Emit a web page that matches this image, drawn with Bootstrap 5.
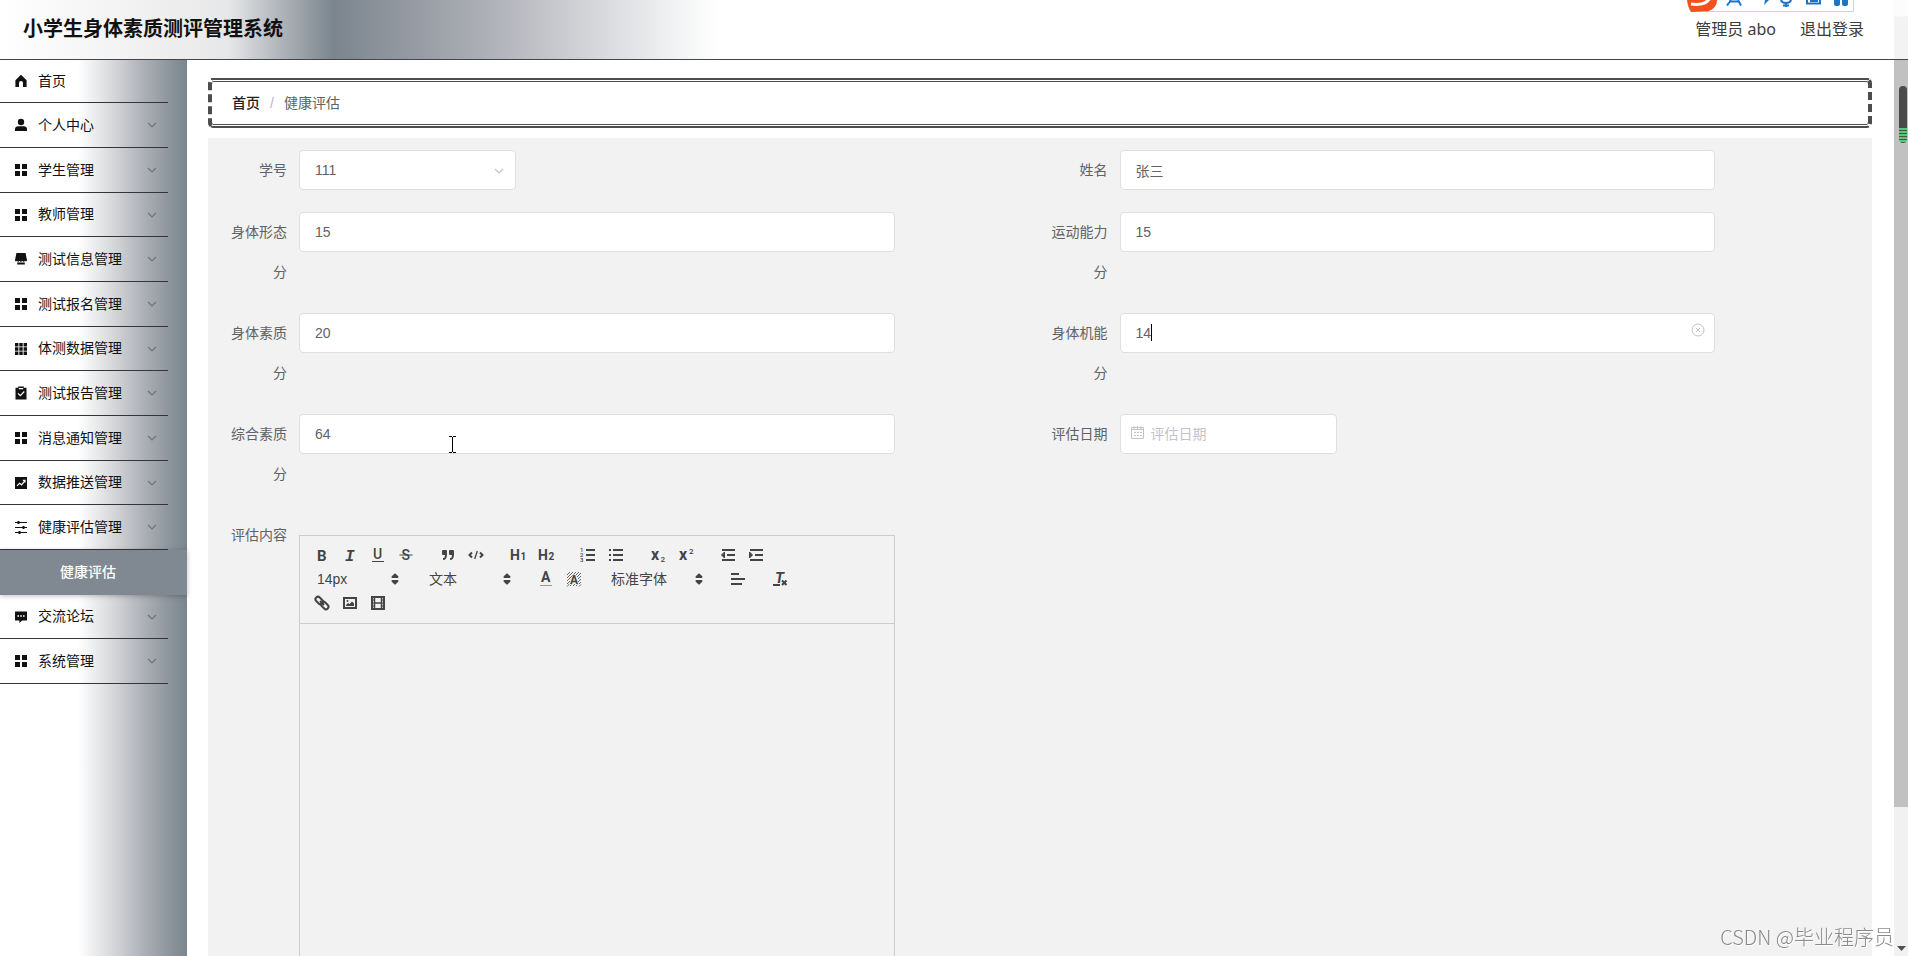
<!DOCTYPE html>
<html lang="zh-CN">
<head>
<meta charset="utf-8">
<meta name="viewport" content="width=device-width, initial-scale=1">
<title>小学生身体素质测评管理系统</title>
<link href="https://cdn.jsdelivr.net/npm/bootstrap@5.3.0/dist/css/bootstrap.min.css" rel="stylesheet">
<style>
  body { font-family: "Liberation Sans", "Noto Sans CJK SC", sans-serif; font-size: 14px; color: #606266; background: #fff; }
  svg { display: block; }
  .topbar { height: 60px; border-bottom: 1px solid #45464b; padding: 0 30px 1px 23px;
    background: linear-gradient(90deg, #fff 0, #ececec 190px, #e6e7e8 228px, #b0b5ba 280px, #7b858d 334px, #9298a0 402px, #adafb6 485px, #d0d2d6 582px, #f3f4f5 680px, #fff 720px); }
  .brand { font-size: 20px; font-weight: 700; color: #111; margin: 0; }
  .toplinks { gap: 24px; font-family: "Noto Sans", "Noto Sans CJK SC", sans-serif; font-size: 16px; }
  .toplinks a, .toplinks span { color: #3c3c3c; text-decoration: none; }
  .ime { right: 39px; top: 0; width: 169px; height: 12px; overflow: hidden; }

  .sidebar { width: 187px; background: linear-gradient(90deg, #fff 0, #fff 78px, #e9eaeb 97px, #cfd1d4 118px, #b4b7bc 138px, #8e969e 168px, #7a858c 187px); }
  .menu li { height: 45px; }
  .menu li:nth-child(3n+1) { height: 44px; }
  .menu li:first-child { height: 43px; }
  .menu a { height: 100%; margin-right: 19px; padding: 0 11px 0 14px; border-bottom: 1px solid #33353a; color: #111; text-decoration: none; gap: 10px; }
  .menu svg.mi { width: 14px; height: 14px; }
  .menu svg.chev { width: 10px; height: 10px; color: #6d737a; }
  .menu li.sub a { margin: 0; padding: 0 0 0 60px; background: #808891; color: #fff; border: 0; font-weight: 500; box-shadow: 0 1px 5px rgba(0,0,0,.25); position: relative; }

  .page-main { padding: 18px 22px 0 21px; }
  .crumbs { height: 50px; border: solid #4d4d4f; border-width: 2px 4px; border-style: solid dashed; border-radius: 5px; padding: 0 20px; margin-bottom: 10px;
    box-shadow: inset 0 1px #fff, inset 0 -1px #fff, inset 0 2px #4d4d4f, inset 0 -2px #4d4d4f; }
  .crumbs .breadcrumb-item + .breadcrumb-item { padding-left: 10px; }
  .crumbs .breadcrumb-item + .breadcrumb-item::before { padding-right: 10px; color: #b5b9c2; }
  .crumbs a { color: #222; text-decoration: none; font-weight: 500; }
  .crumbs .active { color: #606266; }
  .panel { background: #f2f2f2; padding: 12px 12px 0 11px; }

  .field { display: flex; align-items: flex-start; padding-right: 145px; margin-bottom: 21px; }
  .field.first { margin-bottom: 22px; }
  .field > label { width: 80px; flex: none; text-align: right; padding-right: 12px; line-height: 40px; }
  .field .ctl { position: relative; flex: 1; min-width: 0; }
  .field .ctl.short { flex: none; width: 217px; }
  .field .form-control, .field .form-select { height: 40px; font-size: 14px; color: #606266; border: 1px solid #dddfe2; border-radius: 4px; padding: 0 15px; background: #fff; }
  .form-control::placeholder { color: #c0c4cc; }
  .field .form-control.with-icon { padding-left: 30px; }
  .ov { position: absolute; color: #c0c4cc; pointer-events: none; }
  .ov.chev { right: 12px; top: 16px; }
  .ov.cal { left: 11px; top: 12px; }
  .ov.clear { right: 10px; top: 10px; border: 0; padding: 0; background: none; }
  .ov.caret { left: 31px; top: 11px; width: 1px; height: 17px; background: #000; }
  .ov.ibeam { left: 149px; top: 22px; color: #000; }

  .editor { flex: 1; margin-top: 20px; min-width: 0; color: #444; border: 1px solid #ccc; }
  .toolbar { padding: 7px 8px 8px; border-bottom: 1px solid #ccc; }
  .toolbar .line { display: flex; gap: 14px; height: 24px; }
  .toolbar .set { display: flex; }
  .toolbar button { width: 28px; height: 24px; border: 0; background: none; padding: 3px 5px; color: #444; }
  .toolbar button svg { width: 18px; height: 18px; }
  .toolbar svg text { fill: currentColor; font-family: Roboto, "Liberation Sans", sans-serif; font-weight: 500; }
  .pick { position: relative; width: 98px; }
  .pick.wide { width: 108px; }
  .pick select { appearance: none; border: 0; background: none; width: 100%; height: 24px; padding: 0 9px; color: #444; font-size: 14px; line-height: 24px; }
  .pick svg { position: absolute; right: 2px; top: 3px; pointer-events: none; }
  .editor textarea { display: block; width: 100%; height: 400px; border: 0; background: none; resize: none; padding: 12px 15px; outline: 0; }

  .scrollcol { width: 14px; background: #f1f1f1; }
  .scrollcol .cap { height: 60px; border-bottom: 1px solid #45464b; background: linear-gradient(#fcfcfc 16px, #f3f3f3 17px); }
  .scrollcol .thumb { flex: 0 0 83%; max-height: 747px; background: #c1c1c1; padding: 26px 1px 0 5px; }
  .pill { height: 57px; border-radius: 4px; background: linear-gradient(#4a4a4a, #4a4a4a) 0 0 / 100% 42px no-repeat, repeating-linear-gradient(#59c87c 0 2px, #3b5a45 2px 3px); }
  .watermark { position: fixed; right: 14px; bottom: 5px; font-family: "Noto Sans CJK SC", sans-serif; font-weight: 300; font-size: 20px; line-height: 28px; color: #8a8a8a; text-shadow: 1px 1px 0 #fff; }
</style>
</head>
<body class="d-flex vh-100 overflow-hidden">
<svg width="0" height="0" class="position-absolute" aria-hidden="true">
  <symbol id="home" viewBox="0 0 14 14"><path d="M7 .8 12.6 6.200V13H9V9a2 2 0 0 0-4 0v4H1.400V6.200z" fill="currentColor"/></symbol>
  <symbol id="user" viewBox="0 0 14 14"><circle cx="7" cy="4" r="3.200" fill="currentColor"/><path d="M1 13v-2c0-1.800 1.500-2.800 3-2.800h6c1.500 0 3 1 3 2.800v2z" fill="currentColor"/></symbol>
  <symbol id="four" viewBox="0 0 14 14"><path d="M1 1h5v5H1zM8 1h5v5H8zM1 8h5v5H1zM8 8h5v5H8z" fill="currentColor"/></symbol>
  <symbol id="nine" viewBox="0 0 14 14"><path d="M1 1h3.400v3.400H1zM5.300 1h3.400v3.400H5.300zM9.600 1H13v3.400H9.600zM1 5.300h3.400v3.400H1zM5.300 5.300h3.400v3.400H5.300zM9.600 5.300H13v3.400H9.600zM1 9.600h3.400V13H1zM5.300 9.600h3.400V13H5.300zM9.600 9.600H13V13H9.600z" fill="currentColor"/></symbol>
  <symbol id="shop" viewBox="0 0 14 14"><path d="M2.400 1h9.200L13 8.200c0 1-1.200 1.600-2 .6-.9 1.200-2.200 1.200-2.700 0-.8 1.200-2.200 1.200-2.800 0C4.900 10 3.700 10 3 8.800c-.8 1-2 .4-2-.6zM3.200 10.600h7.600V12.600H3.200z" fill="currentColor"/></symbol>
  <symbol id="clip" viewBox="0 0 14 14"><path d="M1.500 1.800h2.700V.600h5.600v1.200h2.700V13.400h-11z" fill="currentColor"/><path d="M4 7.400l2.300 2.300 4-4.200M4.800 2.600h4.400" fill="none" stroke="#fff" stroke-width="1.200"/></symbol>
  <symbol id="chart" viewBox="0 0 14 14"><path d="M1 1h12v12H1z" fill="currentColor"/><path d="M3 9.800l2.600-2.600 2 1.600L11 4.600M8.800 4.400H11v2" fill="none" stroke="#fff" stroke-width="1.200"/></symbol>
  <symbol id="sliders" viewBox="0 0 14 14"><path d="M1 2.500h12M1 7.500h12M1 12.500h12" stroke="currentColor"/><path d="M4.500 1v3M9.500 6v3M5.500 11v3" stroke="currentColor" stroke-width="2"/></symbol>
  <symbol id="chat" viewBox="0 0 14 14"><path d="M1 1.400h12v9H8.200L5.400 13v-2.600H1z" fill="currentColor"/><path d="M3.400 5.200h1.600v1.600H3.400zM6.200 5.200h1.600v1.600H6.200zM9 5.200h1.600v1.600H9z" fill="#fff"/></symbol>
  <symbol id="down" viewBox="0 0 10 10"><path d="M1 3l4 4 4-4" fill="none" stroke="currentColor" stroke-width="1.200"/></symbol>
  <symbol id="updown" viewBox="0 0 18 18"><path d="M6.500 7 9 4.500l2.500 2.500zM6.500 11 9 13.500l2.500-2.500z" fill="currentColor" stroke="currentColor" stroke-width="2" stroke-linejoin="round"/></symbol>
</svg>

<div class="d-flex flex-column flex-grow-1" style="min-width:0">
  <header class="topbar d-flex align-items-center justify-content-between position-relative flex-shrink-0">
    <h1 class="brand">小学生身体素质测评管理系统</h1>
    <div class="toplinks d-flex"><span>管理员 abo</span><a href="#">退出登录</a></div>
    <svg class="ime position-absolute" viewBox="0 0 169 12" aria-hidden="true">
      <path d="M20 11.500H167.500V0" fill="none" stroke="#bcd9e6"/>
      <path d="M1 0h30c0 5-3 10-10 11.500L5 12C3 9 1.500 5 1 0z" fill="#f4501e"/>
      <path d="M5 4c7 1 15 1 19-6" fill="none" stroke="#fff" stroke-width="3"/>
      <g fill="none" stroke="#1b74cc" stroke-width="2"><path d="M41 5.500l4-5.500M52 0l3 5.500M43 1.500h10M95 0c1 4 9 4 10 0M100 3v4M97 5.500h6M121 0v3.500h13V0M124 1h8"/></g>
      <path d="M79 0h4l-5 5z" fill="#1b74cc"/>
      <path d="M148 0h6v4a2 2 0 0 1-2 2h-2a2 2 0 0 1-2-2zM156 0h6v4a2 2 0 0 1-2 2h-2a2 2 0 0 1-2-2z" fill="#1b74cc"/>
    </svg>
  </header>

  <div class="d-flex flex-grow-1" style="min-height:0">
    <nav class="sidebar flex-shrink-0" aria-label="主菜单">
      <ul class="menu list-unstyled m-0">
        <li><a href="#" class="d-flex align-items-center"><svg class="mi"><use href="#home"/></svg>首页</a></li>
        <li><a href="#" class="d-flex align-items-center"><svg class="mi"><use href="#user"/></svg>个人中心<svg class="chev ms-auto"><use href="#down"/></svg></a></li>
        <li><a href="#" class="d-flex align-items-center"><svg class="mi"><use href="#four"/></svg>学生管理<svg class="chev ms-auto"><use href="#down"/></svg></a></li>
        <li><a href="#" class="d-flex align-items-center"><svg class="mi"><use href="#four"/></svg>教师管理<svg class="chev ms-auto"><use href="#down"/></svg></a></li>
        <li><a href="#" class="d-flex align-items-center"><svg class="mi"><use href="#shop"/></svg>测试信息管理<svg class="chev ms-auto"><use href="#down"/></svg></a></li>
        <li><a href="#" class="d-flex align-items-center"><svg class="mi"><use href="#four"/></svg>测试报名管理<svg class="chev ms-auto"><use href="#down"/></svg></a></li>
        <li><a href="#" class="d-flex align-items-center"><svg class="mi"><use href="#nine"/></svg>体测数据管理<svg class="chev ms-auto"><use href="#down"/></svg></a></li>
        <li><a href="#" class="d-flex align-items-center"><svg class="mi"><use href="#clip"/></svg>测试报告管理<svg class="chev ms-auto"><use href="#down"/></svg></a></li>
        <li><a href="#" class="d-flex align-items-center"><svg class="mi"><use href="#four"/></svg>消息通知管理<svg class="chev ms-auto"><use href="#down"/></svg></a></li>
        <li><a href="#" class="d-flex align-items-center"><svg class="mi"><use href="#chart"/></svg>数据推送管理<svg class="chev ms-auto"><use href="#down"/></svg></a></li>
        <li><a href="#" class="d-flex align-items-center"><svg class="mi"><use href="#sliders"/></svg>健康评估管理<svg class="chev ms-auto"><use href="#down"/></svg></a></li>
        <li class="sub"><a href="#" class="d-flex align-items-center" aria-current="page">健康评估</a></li>
        <li><a href="#" class="d-flex align-items-center"><svg class="mi"><use href="#chat"/></svg>交流论坛<svg class="chev ms-auto"><use href="#down"/></svg></a></li>
        <li><a href="#" class="d-flex align-items-center"><svg class="mi"><use href="#four"/></svg>系统管理<svg class="chev ms-auto"><use href="#down"/></svg></a></li>
      </ul>
    </nav>

    <main class="page-main d-flex flex-column flex-grow-1 overflow-hidden">
      <nav class="crumbs d-flex align-items-center flex-shrink-0" aria-label="breadcrumb">
        <ol class="breadcrumb m-0">
          <li class="breadcrumb-item"><a href="#">首页</a></li>
          <li class="breadcrumb-item active" aria-current="page">健康评估</li>
        </ol>
      </nav>

      <form class="panel flex-grow-1">
        <div class="row g-0">
          <div class="col-6 field first"><label for="sid">学号</label>
            <div class="ctl short"><select id="sid" class="form-select"><option>111</option></select>
              <svg class="ov chev" width="10" height="10"><use href="#down"/></svg></div></div>
          <div class="col-6 field first"><label for="sname">姓名</label>
            <div class="ctl"><input id="sname" class="form-control" value="张三"></div></div>
          <div class="col-6 field"><label for="f1">身体形态分</label>
            <div class="ctl"><input id="f1" class="form-control" value="15"></div></div>
          <div class="col-6 field"><label for="f2">运动能力分</label>
            <div class="ctl"><input id="f2" class="form-control" value="15"></div></div>
          <div class="col-6 field"><label for="f3">身体素质分</label>
            <div class="ctl"><input id="f3" class="form-control" value="20"></div></div>
          <div class="col-6 field"><label for="f4">身体机能分</label>
            <div class="ctl"><input id="f4" class="form-control" value="14"><span class="ov caret"></span>
              <button type="button" class="ov clear" aria-label="清空"><svg width="14" height="14" viewBox="0 0 14 14" fill="none" stroke="currentColor"><circle cx="7" cy="7" r="6"/><path d="M5 5l4 4M9 5l-4 4"/></svg></button></div></div>
          <div class="col-6 field"><label for="f5">综合素质分</label>
            <div class="ctl"><input id="f5" class="form-control" value="64">
              <svg class="ov ibeam" width="9" height="17" viewBox="0 0 9 17"><path d="M1 .5h3M5 .5h3M4.500 1v15M1 16.500h3M5 16.500h3" fill="none" stroke="currentColor"/></svg></div></div>
          <div class="col-6 field"><label for="f6">评估日期</label>
            <div class="ctl short"><input id="f6" class="form-control with-icon" placeholder="评估日期">
              <svg class="ov cal" width="13" height="14" viewBox="0 0 13 14" fill="none" stroke="currentColor"><path d="M.5 1.500h12v11H.500zM.5 3.500h12M3 0v3M6.500 0v3M10 0v3M3 6.500h2M6 6.500h2M9 6.500h2M3 9.500h2M6 9.500h2M9 9.500h2"/></svg></div></div>
          <div class="col-6 field mb-0"><label for="content">评估内容</label>
            <div class="editor">
              <div class="toolbar">
                <div class="line">
                  <div class="set">
                    <button type="button" aria-label="加粗"><svg viewBox="0 0 18 18"><text x="4" y="14.500" font-size="15" style="font-weight:700">B</text></svg></button>
                    <button type="button" aria-label="斜体"><svg viewBox="0 0 18 18"><text x="4" y="14.500" font-size="16" font-style="italic" style="font-family:'Liberation Mono',monospace;font-weight:700">I</text></svg></button>
                    <button type="button" aria-label="下划线"><svg viewBox="0 0 18 18"><text x="4" y="13" font-size="14" style="font-weight:500">U</text><path d="M3 15.500h12" stroke="currentColor"/></svg></button>
                    <button type="button" aria-label="删除线"><svg viewBox="0 0 18 18"><text x="4.500" y="14" font-size="14">S</text><path d="M2.500 9h13" stroke="currentColor"/></svg></button>
                  </div>
                  <div class="set">
                    <button type="button" aria-label="引用"><svg viewBox="0 0 18 18" fill="currentColor" stroke="currentColor"><path d="M4 5h3v3H4zM11 5h3v3h-3z" stroke-width="2" stroke-linejoin="round"/><path d="M7 8c0 4-.8 5-3 5M14 8c0 4-.8 5-3 5" fill="none" stroke-width="2"/></svg></button>
                    <button type="button" aria-label="代码"><svg viewBox="0 0 18 18" fill="none" stroke="currentColor" stroke-width="2"><path d="M5 6.500 2.500 9 5 11.500M13 6.500 15.500 9 13 11.500"/><path d="M10.300 5 7.700 13" stroke-width="1.300"/></svg></button>
                  </div>
                  <div class="set">
                    <button type="button" aria-label="标题 1"><svg viewBox="0 0 18 18"><text x="1" y="14" font-size="14" style="font-weight:700">H</text><text x="11.500" y="14" font-size="10" style="font-weight:700">1</text></svg></button>
                    <button type="button" aria-label="标题 2"><svg viewBox="0 0 18 18"><text x="1" y="14" font-size="14" style="font-weight:700">H</text><text x="11.500" y="14" font-size="10" style="font-weight:700">2</text></svg></button>
                  </div>
                  <div class="set">
                    <button type="button" aria-label="有序列表"><svg viewBox="0 0 18 18"><path d="M7 4h9M7 9h9M7 14h9" stroke="currentColor" stroke-width="2"/><text x="1" y="6" font-size="6">1</text><text x="1" y="11" font-size="6">2</text><text x="1" y="16" font-size="6">3</text></svg></button>
                    <button type="button" aria-label="无序列表"><svg viewBox="0 0 18 18"><path d="M6 4h10M6 9h10M6 14h10M2 4h2M2 9h2M2 14h2" stroke="currentColor" stroke-width="2"/></svg></button>
                  </div>
                  <div class="set">
                    <button type="button" aria-label="下标"><svg viewBox="0 0 18 18"><text x="2" y="14" font-size="16" style="font-weight:700">x</text><text x="11.500" y="16" font-size="8">2</text></svg></button>
                    <button type="button" aria-label="上标"><svg viewBox="0 0 18 18"><text x="2" y="14" font-size="16" style="font-weight:700">x</text><text x="12" y="8" font-size="8">2</text></svg></button>
                  </div>
                  <div class="set">
                    <button type="button" aria-label="减少缩进"><svg viewBox="0 0 18 18"><path d="M3 4h13M8 9h8M3 14h13" stroke="currentColor" stroke-width="2"/><path d="M5.500 6v6L2.500 9z" fill="currentColor" stroke="currentColor"/></svg></button>
                    <button type="button" aria-label="增加缩进"><svg viewBox="0 0 18 18"><path d="M3 4h13M8 9h8M3 14h13" stroke="currentColor" stroke-width="2"/><path d="M2.500 6v6l3-3z" fill="currentColor" stroke="currentColor"/></svg></button>
                  </div>
                </div>
                <div class="line">
                  <div class="pick"><select aria-label="字号"><option>14px</option></select><svg width="18" height="18"><use href="#updown"/></svg></div>
                  <div class="pick"><select aria-label="段落"><option>文本</option></select><svg width="18" height="18"><use href="#updown"/></svg></div>
                  <div class="set">
                    <button type="button" aria-label="文字颜色"><svg viewBox="0 0 18 18"><text x="4" y="12" font-size="14" style="font-weight:700">A</text><path d="M3 15.500h12" stroke="#999"/></svg></button>
                    <button type="button" aria-label="背景颜色"><svg viewBox="0 0 18 18"><path d="M2 5l3-3M2 8l6-6M2 11l9-9M2 14l3-3M2 16.500l3-3M10 6l4-4M12 7l4-4M13 9l3-3M13 12l3-3M14 14l2-2M5 16l2-2M8 16l2-2M11 16l2-2M14 16.500l2-2" stroke="currentColor" stroke-width=".8"/><text x="5" y="14" font-size="12" style="font-weight:700" stroke="#f2f2f2" stroke-width="1" paint-order="stroke">A</text></svg></button>
                  </div>
                  <div class="pick wide"><select aria-label="字体"><option>标准字体</option></select><svg width="18" height="18"><use href="#updown"/></svg></div>
                  <div class="set"><button type="button" aria-label="对齐"><svg viewBox="0 0 18 18"><path d="M2 4h8M2 9h14M2 14h11" stroke="currentColor" stroke-width="2"/></svg></button></div>
                  <div class="set"><button type="button" aria-label="清除格式"><svg viewBox="0 0 18 18"><text x="4" y="13" font-size="15" font-style="italic" style="font-weight:700">T</text><path d="M2 15h7M11 10.500l4.500 4.500M15.500 10.500 11 15" stroke="currentColor" stroke-width="2"/></svg></button></div>
                </div>
                <div class="line">
                  <div class="set">
                    <button type="button" aria-label="链接"><svg viewBox="0 0 18 18" fill="none" stroke="currentColor" stroke-width="2"><rect x="2" y="4" width="8.500" height="5" rx="2.500" transform="rotate(45 6.200 6.500)"/><rect x="7.500" y="9" width="8.500" height="5" rx="2.500" transform="rotate(45 11.700 11.500)"/><path d="M7 7l4 4"/></svg></button>
                    <button type="button" aria-label="图片"><svg viewBox="0 0 18 18"><rect x="3" y="4" width="12" height="10" fill="none" stroke="currentColor" stroke-width="2"/><circle cx="6.500" cy="7" r="1" fill="currentColor"/><path d="M5 12v-1l2-2 1.500 1L11 7.500l2 2V12z" fill="currentColor"/></svg></button>
                    <button type="button" aria-label="视频"><svg viewBox="0 0 18 18" fill="none" stroke="currentColor"><rect x="3" y="3" width="12" height="12" stroke-width="2"/><path d="M5.500 3v12M12.500 3v12M5.500 9h7" stroke-width="1.500"/><path d="M3 6h2.500M3 9h2.500M3 12h2.500M12.500 6H15M12.500 9H15M12.500 12H15"/></svg></button>
                  </div>
                </div>
              </div>
              <textarea id="content"></textarea>
            </div>
          </div>
        </div>
      </form>
    </main>
  </div>
</div>

<div class="scrollcol d-flex flex-column flex-shrink-0" aria-hidden="true">
  <div class="cap flex-shrink-0"></div>
  <div class="thumb"><div class="pill"></div></div>
  <svg class="mt-auto mb-1" width="14" height="6" viewBox="0 0 14 6"><path d="M3 0h9L7.500 5z" fill="#505050"/></svg>
</div>
<div class="watermark">CSDN @毕业程序员</div>
<script src="https://cdn.jsdelivr.net/npm/bootstrap@5.3.0/dist/js/bootstrap.bundle.min.js"></script>
</body>
</html>
